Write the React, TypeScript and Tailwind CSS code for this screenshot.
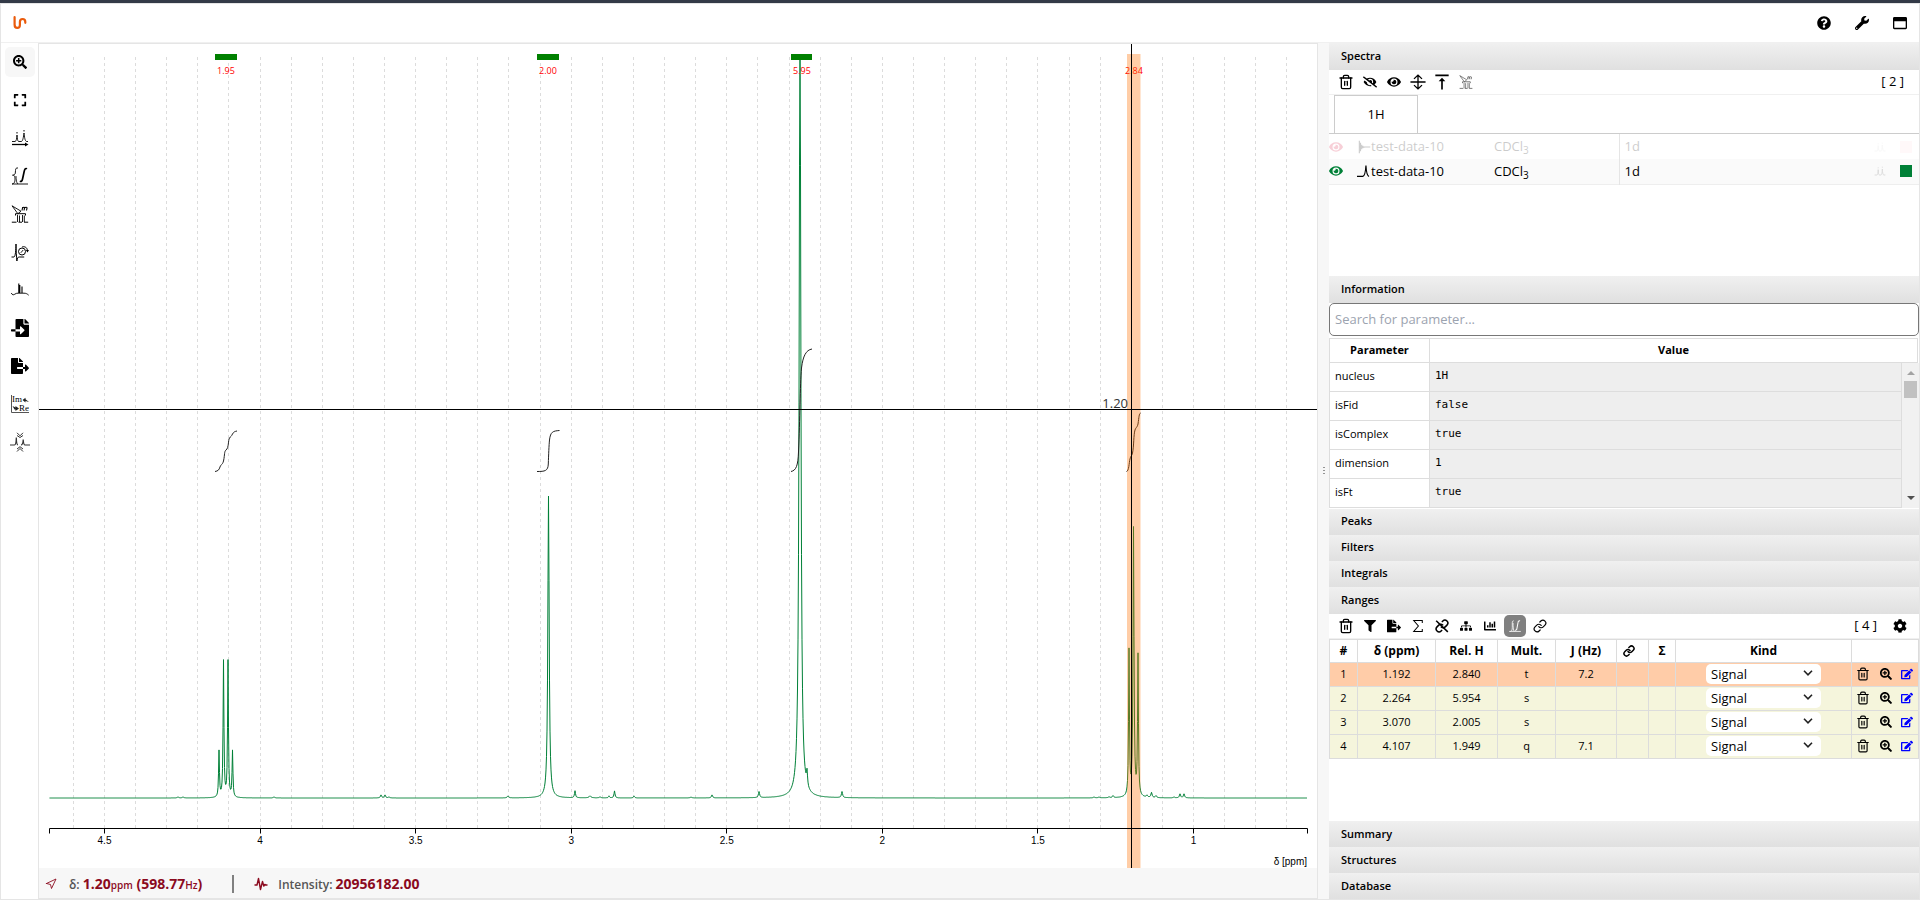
import React from "react";
import { Link as LinkIcon, Navigation, Trash2 } from "lucide-react";
import {
  FaChartBar,
  FaCog,
  FaEdit,
  FaExpand,
  FaEye,
  FaEyeSlash,
  FaFileExport,
  FaFileImport,
  FaFilter,
  FaQuestionCircle,
  FaRegWindowMaximize,
  FaSearchPlus,
  FaSitemap,
  FaWrench,
} from "react-icons/fa";
import { MdVerticalAlignTop } from "react-icons/md";

type IconProps = { className?: string };

function Glyph({ className, children }: { className?: string; children: React.ReactNode }) {
  return (
    <svg
      viewBox="0 0 18 18"
      className={className}
      fill="none"
      stroke="currentColor"
      strokeWidth="1"
      aria-hidden="true"
    >
      {children}
    </svg>
  );
}

const Logo = () => (
  <svg viewBox="0 0 14 14" className="size-3.5" fill="none" aria-hidden="true">
    <path
      d="M1.6 1.2v7.2c0 2.4 1 3.5 2.7 3.5s2.6-1.1 2.6-3V6c0-1.900 1-3 2.700-3s2.700 1 2.700 3v.8"
      stroke="#ea5b0c"
      strokeWidth="2.2"
      strokeLinecap="round"
    />
  </svg>
);

const PeakPickingIcon = ({ className }: IconProps) => (
  <Glyph className={className}>
    <path d="M1 12.500H4.200C5.300 12 5.700 10 6 6C6.300 10 6.700 12 7.500 12.500H10.500C11.800 12 12.500 8 13 4C13.400 8 14 12 15.500 12.500H17" strokeWidth=".9" />
    <path d="M6 3v1.500M13 1v1.500" strokeWidth="1" />
    <path d="M1 15.500h13.500" strokeWidth="1.300" />
    <path d="M14 13.500l3.500 2-3.500 2z" fill="currentColor" stroke="none" />
  </Glyph>
);

const IntegrateIcon = ({ className }: IconProps) => (
  <Glyph className={className}>
    <path d="M7 1C5.200.7 4.600 1.400 4.500 3.500L4.300 6C4.200 7.500 3 8 1.500 8.200C3 8 4 9 4 11c0 3 0 5.500-3 6h16" strokeWidth=".9" />
    <path d="M5 9c.2 4 .4 7 2 8" strokeWidth=".8" />
    <path d="M16 1.800c-1.500-.8-2.300 0-2.800 2.500l-1.600 7.500c-.5 2.300-1.200 3-2.800 2.400" strokeWidth="1.700" />
  </Glyph>
);

const RangesIcon = ({ className }: IconProps) => (
  <Glyph className={className}>
    <path d="M1 .8l9 5.400M1 .8l5.500 7.400M10 6.200L6.500 9" strokeWidth=".9" />
    <path d="M11 5.500l.7-3.500M11.500 3c1-1.200 2.300-1 2 .2l-.5 2.300M13.500 3c1-1.200 2.800-1 2.500.2l-.5 2.300" strokeWidth="1.100" />
    <path d="M4.500 10.500v-1.800h10v1.800" strokeWidth="1" />
    <path d="M.8 17.200h4.700M7.500 17.200h3.500M13 17.200h4.200" strokeWidth="1" />
    <path d="M6.500 10v7M8.500 10.500v6.500M11.500 10v7M13.300 10.500v6.500" strokeWidth=".9" />
  </Glyph>
);

const PhaseIcon = ({ className }: IconProps) => (
  <Glyph className={className}>
    <path d="M.5 14H3c1.500-.5 1.800-7 2-13c.2 7 .3 12 .9 17c.4-3 .8-4 2.300-4h5" />
    <circle cx="11" cy="8.500" r="3.500" />
    <path d="M9.800 9.800l2.400-2.800M11 4c3-1 5.500.5 5.500 4.500" strokeWidth=".9" />
    <path d="M14.800 7l1.700 2.500L18 7z" fill="currentColor" stroke="none" />
  </Glyph>
);

const BaselineIcon = ({ className }: IconProps) => (
  <Glyph className={className}>
    <path d="M.3 12c.8 2 2.200 2.200 3.500 1.200c1-.8 2-1 3.200-1h6c2 0 3 .5 4.700 2" strokeWidth=".9" />
    <path d="M7.800 12V2.500M8.800 12V4M11 12V5.500" strokeWidth="1.100" />
  </Glyph>
);

const RealImagIcon = ({ className }: IconProps) => (
  <svg viewBox="0 0 18 18" className={className} aria-hidden="true">
    <path d="M.5 0v17.500H18" fill="none" stroke="#555" strokeWidth="1" />
    <text x="1" y="6.500" fontSize="9" fontFamily="Liberation Serif, serif">Im</text>
    <text x="8" y="16" fontSize="9" fontFamily="Liberation Serif, serif">Re</text>
    <path d="M11.500 5l3-2.300v1.500L18 7l-3.500-1v1.500zM8 13.500L4.500 11v1.500L1.500 11l2 3.500h1V16z" fill="#222" />
  </svg>
);

const ExclusionIcon = ({ className }: IconProps) => (
  <svg viewBox="0 0 22 20" className={className} fill="none" stroke="#333" aria-hidden="true">
    <path d="M1 13h4.500c1.200 0 1.600-2 1.800-7.500c.2 5.500.5 7.500 1.700 7.500M12 13c1.500 0 2-1.500 2.200-5.500c.3 4 .6 5.500 1.800 5.500H21" strokeWidth="1.200" />
    <path d="M8 .8l3 3 3-3M8 3.500l3 2 3-2M8 19.500l3-3 3 3M8 17l3-2.300L14 17" strokeWidth="1" />
  </svg>
);

const ShowSameTopIcon = ({ className }: IconProps) => (
  <Glyph className={className}>
    <path d="M.5 9h17M9 1.500v15M4.500 5.500L9 1.200l4.500 4.300M4.500 12.500L9 16.800l4.500-4.300" strokeWidth="1.500" />
  </Glyph>
);

const SigmaIcon = ({ className }: IconProps) => (
  <Glyph className={className}>
    <path d="M14.500 5V2H3.500l6 7-6 7h11v-3" strokeWidth="1.300" />
  </Glyph>
);

const UnlinkIcon = ({ className }: IconProps) => (
  <svg viewBox="0 0 24 24" className={className} fill="none" stroke="currentColor" strokeWidth="2.600" aria-hidden="true">
    <path d="M10 13a5 5 0 0 0 7.540.54l3-3a5 5 0 0 0-7.070-7.070l-1.720 1.710" />
    <path d="M14 11a5 5 0 0 0-7.540-.54l-3 3a5 5 0 0 0 7.070 7.070l1.710-1.710" />
    <path d="M2 3l20 19" />
  </svg>
);

const IntegralCurvesIcon = ({ className }: IconProps) => (
  <Glyph className={className}>
    <path d="M1.500 16h15M7.500 2.500C6 2 5.500 3 5.500 5v6c0 3-.5 4.500-2.500 5M6.500 5c0 5 .2 9 1.500 11" />
    <path d="M15.500 2.500c-1.600-.5-2.500.5-2.700 2.500l-1.300 7c-.3 2-1 2.700-2.500 2.300" strokeWidth="1.300" />
  </Glyph>
);

const FidIcon = ({ className }: IconProps) => (
  <Glyph className={className}>
    <path d="M3 1v16M4.500 3.500v11M6 6v6M7.500 7.500v3M9 8.300v1.700M3 9h14" strokeWidth="1.400" />
  </Glyph>
);

const FtIcon = ({ className }: IconProps) => (
  <Glyph className={className}>
    <path d="M0 16h7.500C10.500 15.500 11 10 11.500 2c.4 8 1 13 4 14" strokeWidth="1.500" />
  </Glyph>
);

const SmallPeaksIcon = ({ className }: IconProps) => (
  <Glyph className={className}>
    <path d="M1 15h3c1.500 0 2-2 2.300-8c.3 6 .7 8 2.200 8h1.500c1.700 0 2.200-3 2.500-9c.3 6 1 9 2.500 9h2M6.300 3.500v1.500M12.500 2.500V4" strokeWidth="1.300" />
  </Glyph>
);

const PulseIcon = ({ className }: IconProps) => (
  <svg viewBox="0 0 14 14" className={className} fill="none" stroke="currentColor" strokeWidth="1.400" strokeLinejoin="round" aria-hidden="true">
    <path d="M.5 8H3L4.500 1.500l2 11 2-8L9.800 9l1-1.500 1 .5h1.700" />
  </svg>
);

/* ---------------------------------------------------------------- chart */

const BASELINE = 798;
const MAX_HEIGHT = 740;
const peaks: Array<[number, number, number]> = [
  [219, 46, 0.5], [223.5, 136, 0.5], [228, 136, 0.5], [232.500, 46, 0.5],
  [548.5, 302, 0.8], [800, 790, 1], [807, 14, 0.6],
  [1129, 145, 0.5], [1133.5, 268, 0.6], [1138, 140, 0.5],
  [178, 1, 0.8], [183, 1, 0.8], [274, 1, 0.8], [381, 3, 0.7], [385, 3, 0.7],
  [389, 1, 0.8], [508, 2, 0.8], [575, 7, 0.6], [590, 2, 1.200], [600, 1, 0.8],
  [609, 2, 0.6], [614.5, 7, 0.6], [634, 2, 0.7], [691, 1, 0.7], [712, 3, 0.7],
  [759, 6, 0.7], [842, 6, 0.7], [1094, 1, 0.7], [1099, 1, 0.7], [1109, 1, 0.7],
  [1113, 2, 0.7], [1147, 2, 0.7], [1151.5, 5, 0.7], [1156, 2, 0.7],
  [1174, 1, 0.7], [1180, 4, 0.7], [1184, 4, 0.7],
];

function spectrumPath() {
  let d = "";
  for (let x = 49.5; x <= 1307; x += 0.5) {
    let h = 0;
    for (const [c, height, w] of peaks) {
      const dx = x - c;
      h += (height * w * w) / (dx * dx + w * w);
    }
    d += `${d ? "L" : "M"}${x} ${(BASELINE - Math.min(h, MAX_HEIGHT)).toFixed(1)}`;
  }
  return d;
}

const ppmToX = (ppm: number) => 104.5 + (4.5 - ppm) * 311.14;
const gridLines = Array.from({ length: 40 }, (_, i) => Math.floor(ppmToX(4.6 - i * 0.1)) + 0.5);
const ticks = [4.5, 4, 3.5, 3, 2.5, 2, 1.5, 1];
const ranges = [
  { x: 215, w: 22, label: "1.95" },
  { x: 537, w: 22, label: "2.00" },
  { x: 791, w: 21, label: "5.95" },
];

function Chart() {
  return (
    <svg viewBox="39 44 1278 824" className="block size-full" role="img" aria-label="1H spectrum">
      <g stroke="#dcdcdc" strokeDasharray="3 3">
        {gridLines.map((x) => (
          <path key={x} d={`M${x} 57V828`} />
        ))}
      </g>
      <path d={spectrumPath()} fill="none" stroke="#008037" strokeWidth="1" strokeLinejoin="round" />
      <g fill="none" stroke="#222" strokeWidth="1">
        <path d="M215 471.500C218 471 219 470 220 467C221 464 222.500 465 223.500 461C225 454 224 452 226 450C229 448 228 440 229.500 438C231 436 231 437 232.500 434C234 431.500 235 431.500 237 431" />
        <path d="M537 471.500C545 471.500 548 471 548.300 464C548.600 455 549 445 549.500 440C550.500 431.500 553 431 559.500 430.500" />
        <path d="M791 471.500C796 470.500 798 466 798.500 452C800 420 800 385 801.500 368C803 356 806 350 812 349" />
        <path d="M1126.500 471.500C1129 471 1129 463 1130 459C1130.500 456 1132 456 1132.500 453C1134 446 1133.500 435 1135 430C1136 427 1137 428 1138 424C1139 417 1139 414 1140.500 413" />
      </g>
      <g fontFamily="Open Sans, Noto Sans, sans-serif" fontSize="9" fill="#ff0000" textAnchor="middle">
        {ranges.map((r) => (
          <g key={r.label}>
            <rect x={r.x} y="54" width={r.w} height="6" fill="#008000" />
            <text x={r.x + 11} y="74">{r.label}</text>
          </g>
        ))}
        <text x="1134" y="74">2.84</text>
      </g>
      <rect x="1127" y="54" width="13.500" height="814" fill="#ff6f00" opacity=".35" />
      <path d="M49.500 833.500V828.500H1307.500V833.500" fill="none" stroke="#000" />
      <g fontFamily="Liberation Sans, Arial, sans-serif" fontSize="10" textAnchor="middle">
        {ticks.map((t) => (
          <g key={t}>
            <path d={`M${Math.floor(ppmToX(t)) + 0.5} 828.500v5`} stroke="#000" />
            <text x={ppmToX(t)} y="844">{t}</text>
          </g>
        ))}
        <text x="1307" y="865" textAnchor="end">δ [ppm]</text>
      </g>
      <text x="1128" y="408" textAnchor="end" fontSize="13" fill="#333" fontFamily="Open Sans, Noto Sans, sans-serif">
        1.20
      </text>
      <path d="M39 409.500H1317M1131.500 44V868" stroke="#000" />
    </svg>
  );
}

/* --------------------------------------------------------------- panels */

function PanelHeader({ title, open }: { title: string; open?: boolean }) {
  return (
    <h2 className={open ? "h-[27px] flex-none" : "h-[26px] flex-none"}>
      <button
        type="button"
        aria-expanded={Boolean(open)}
        className="flex size-full items-center bg-linear-to-b from-[#f0f0f0] to-[#e0e0e0] px-3 text-[11px] font-semibold text-black"
      >
        {title}
      </button>
    </h2>
  );
}

function ToolButton({ label, children, active }: { label: string; children: React.ReactNode; active?: boolean }) {
  return (
    <button
      type="button"
      aria-label={label}
      className={
        active
          ? "mx-0.5 flex size-[22px] items-center justify-center rounded-[5px] bg-[#808080] text-white"
          : "flex size-6 items-center justify-center"
      }
    >
      {children}
    </button>
  );
}

const spectra = [
  { name: "test-data-10", icon: <FidIcon className="size-3.5" />, eye: "text-[#dc143c]", color: "bg-[#ffdfe5]", hidden: true },
  { name: "test-data-10", icon: <FtIcon className="size-3.5" />, eye: "text-[#008037]", color: "bg-[#008037]", hidden: false },
];

function SpectraPanel() {
  return (
    <div className="min-h-0 flex-[204] bg-white">
      <div className="flex h-[25px] items-center border-b border-[#f0f0f0] pr-[15px] pl-[5px]">
        <ToolButton label="Delete"><Trash2 className="size-4" /></ToolButton>
        <ToolButton label="Hide all"><FaEyeSlash className="size-3.5" /></ToolButton>
        <ToolButton label="Show all"><FaEye className="size-3.5" /></ToolButton>
        <ToolButton label="Same top"><ShowSameTopIcon className="size-4" /></ToolButton>
        <ToolButton label="Reset scale"><MdVerticalAlignTop className="size-5" /></ToolButton>
        <ToolButton label="Automatic ranges"><RangesIcon className="size-3.5 text-[#555]" /></ToolButton>
        <span className="ml-auto text-[13px]">[ 2 ]</span>
      </div>
      <div role="tablist" className="flex h-[39px] border-b border-[#cccccc] pl-[5px]">
        <button type="button" role="tab" aria-selected="true" className="w-[84px] border border-b-0 border-[#cccccc] bg-white text-[13px]">
          1H
        </button>
      </div>
      <table className="w-full table-fixed border-collapse text-[13px]">
        <colgroup>
          <col className="w-[165px]" />
          <col className="w-[125px]" />
          <col />
          <col className="w-[50px]" />
        </colgroup>
        <tbody>
          {spectra.map((s, i) => (
            <tr key={i} className={s.hidden ? "h-[25px] opacity-20" : "h-[25px] border-b border-[#eeeeee] bg-[#fafafa]"}>
              <td className="p-0">
                <div className="flex items-center">
                  <button type="button" aria-label="Toggle visibility" className={s.eye}><FaEye className="size-3.5" /></button>
                  <span className="ml-3.5">{s.icon}</span>
                  {s.name}
                </div>
              </td>
              <td className="p-0">CDCl<sub className="bottom-[-3px] text-[10px]">3</sub></td>
              <td className="border-l border-[#e5e5e5] p-0 pl-[5px]">1d</td>
              <td className="p-0">
                <div className="flex items-center justify-end gap-3.5 pr-[7px]">
                  <SmallPeaksIcon className="size-3 text-[#d8d8d8]" />
                  <span className={`size-3 ${s.color}`} />
                </div>
              </td>
            </tr>
          ))}
        </tbody>
      </table>
    </div>
  );
}

const parameters = [
  ["nucleus", "1H"],
  ["isFid", "false"],
  ["isComplex", "true"],
  ["dimension", "1"],
  ["isFt", "true"],
];

function InformationPanel() {
  return (
    <div className="flex flex-none flex-col bg-white pb-px">
      <input
        type="text"
        aria-label="Search for parameter"
        placeholder="Search for parameter..."
        className="h-[33px] w-full rounded-[5px] border border-[#777777] px-[5px] text-[13px] placeholder:text-[#9ca3af]"
      />
      <div className="relative mt-0.5 pr-px">
        <table className="w-full table-fixed border-collapse border border-[#dddddd] text-[11px]">
          <thead>
            <tr className="h-6">
              <th className="w-[100px] border border-[#dddddd] p-0 font-bold">Parameter</th>
              <th className="border border-[#dddddd] p-0 font-bold">Value</th>
            </tr>
          </thead>
          <tbody>
            {parameters.map(([name, value]) => (
              <tr key={name} className="h-[29px]">
                <td className="border border-[#dddddd] p-0 pl-[5px]">{name}</td>
                <td className="border border-[#dddddd] bg-[#eeeeee] p-0 pl-[5px] font-['DejaVu_Sans_Mono',monospace]">{value}</td>
              </tr>
            ))}
          </tbody>
        </table>
        <div className="absolute top-[25px] right-0 bottom-0 flex w-[18px] flex-col items-center border-l border-[#dddddd] bg-[#f1f1f1] py-2">
          <svg viewBox="0 0 8 4" className="h-1 w-2" aria-hidden="true"><path d="M0 4l4-4 4 4z" fill="#a3a3a3" /></svg>
          <div className="mt-1.5 h-[17px] w-[13px] bg-[#c1c1c1]" />
          <svg viewBox="0 0 8 4" className="mt-auto h-1 w-2" aria-hidden="true"><path d="M0 0l4 4 4-4z" fill="#505050" /></svg>
        </div>
      </div>
    </div>
  );
}

const rangeRows = [
  { ppm: "1.192", rel: "2.840", mult: "t", j: "7.2" },
  { ppm: "2.264", rel: "5.954", mult: "s", j: "" },
  { ppm: "3.070", rel: "2.005", mult: "s", j: "" },
  { ppm: "4.107", rel: "1.949", mult: "q", j: "7.1" },
];

const cell = "border border-[#dcdcdc] p-0";

function RangesPanel() {
  return (
    <div className="min-h-0 flex-[206] bg-white">
      <div className="flex h-[25px] items-center border-b border-[#f0f0f0] pr-3 pl-[5px]">
        <ToolButton label="Delete"><Trash2 className="size-4" /></ToolButton>
        <ToolButton label="Filter"><FaFilter className="size-3" /></ToolButton>
        <ToolButton label="Export"><FaFileExport className="size-3.5" /></ToolButton>
        <ToolButton label="Sum"><SigmaIcon className="size-3.5" /></ToolButton>
        <ToolButton label="Unlink"><UnlinkIcon className="size-3.5" /></ToolButton>
        <ToolButton label="Multiplicity trees"><FaSitemap className="size-3" /></ToolButton>
        <ToolButton label="Chart"><FaChartBar className="size-3" /></ToolButton>
        <ToolButton label="Integral curves" active><IntegralCurvesIcon className="size-3.5" /></ToolButton>
        <ToolButton label="Link"><LinkIcon className="size-3.5" /></ToolButton>
        <span className="mr-4 ml-auto text-[13px]">[ 4 ]</span>
        <button type="button" aria-label="Preferences"><FaCog className="size-3.5" /></button>
      </div>
      <table className="w-full table-fixed border-collapse text-center text-[11px]">
        <thead>
          <tr className="h-[23px] text-xs">
            <th className={`${cell} w-7`}>#</th>
            <th className={`${cell} w-[78px]`}>δ (ppm)</th>
            <th className={`${cell} w-[62px]`}>Rel. H</th>
            <th className={`${cell} w-[58px]`}>Mult.</th>
            <th className={`${cell} w-[61px]`}>J (Hz)</th>
            <th className={`${cell} w-8`} aria-label="Link"><LinkIcon className="ml-1.5 size-3" strokeWidth={3} /></th>
            <th className={`${cell} w-[27px]`}>Σ</th>
            <th className={cell}>Kind</th>
            <th className={`${cell} w-[67px]`} aria-label="Actions" />
          </tr>
        </thead>
        <tbody>
          {rangeRows.map((r, i) => (
            <tr key={r.ppm} className={i === 0 ? "h-6 bg-[#ffcca8]" : "h-6 bg-[#f5f5dc]"}>
              <td className={cell}>{i + 1}</td>
              <td className={cell}>{r.ppm}</td>
              <td className={cell}>{r.rel}</td>
              <td className={cell}>{r.mult}</td>
              <td className={cell}>{r.j}</td>
              <td className={cell} />
              <td className={cell} />
              <td className={cell}>
                <div className="relative mx-auto w-[115px]">
                  <select aria-label={`Kind of range ${i + 1}`} className="block h-5 w-full appearance-none rounded-[5px] bg-white px-[5px] text-[13px] leading-5">
                    <option>Signal</option>
                  </select>
                  <svg viewBox="0 0 10 6" className="pointer-events-none absolute top-1.5 right-2 h-1.5 w-2.5" fill="none" stroke="#222" strokeWidth="1.600" aria-hidden="true">
                    <path d="M1 .8l4 4 4-4" />
                  </svg>
                </div>
              </td>
              <td className={cell}>
                <div className="flex items-center justify-between pr-[5px] pl-1">
                  <button type="button" aria-label="Delete range"><Trash2 className="size-3.5" /></button>
                  <button type="button" aria-label="Zoom to range"><FaSearchPlus className="size-3" /></button>
                  <button type="button" aria-label="Edit range" className="text-[#0000ff]"><FaEdit className="size-3" /></button>
                </div>
              </td>
            </tr>
          ))}
        </tbody>
      </table>
    </div>
  );
}

/* ----------------------------------------------------------------- page */

const tools: Array<{ label: string; icon: React.ReactNode }> = [
  { label: "Zoom", icon: <FaSearchPlus className="size-3.5" /> },
  { label: "Full screen", icon: <FaExpand className="size-3.5" /> },
  { label: "Peak picking", icon: <PeakPickingIcon className="size-[18px]" /> },
  { label: "Integrate", icon: <IntegrateIcon className="size-[18px]" /> },
  { label: "Pick ranges", icon: <RangesIcon className="size-[18px]" /> },
  { label: "Phase correction", icon: <PhaseIcon className="size-[18px]" /> },
  { label: "Baseline correction", icon: <BaselineIcon className="size-[18px]" /> },
  { label: "Import", icon: <FaFileImport className="size-[18px]" /> },
  { label: "Export", icon: <FaFileExport className="size-[18px]" /> },
  { label: "Real / imaginary", icon: <RealImagIcon className="size-[18px]" /> },
  { label: "Exclusion zones", icon: <ExclusionIcon className="h-5 w-[22px]" /> },
];

export default function App() {
  return (
    <div className="flex h-screen flex-col border-t-[3px] border-[#333a47] bg-white font-['Open_Sans','Noto_Sans',sans-serif] text-black">
      <div className="flex min-h-0 flex-1 flex-col border border-[#e5e5e5]">
        <header className="flex h-[39px] flex-none items-center justify-between border-b border-[#f0f0f0] pr-3 pl-3">
          <a href="#" aria-label="Home"><Logo /></a>
          <div className="flex items-center gap-6">
            <button type="button" aria-label="Help"><FaQuestionCircle className="size-3.5" /></button>
            <button type="button" aria-label="Settings"><FaWrench className="size-3.5" /></button>
            <button type="button" aria-label="Window"><FaRegWindowMaximize className="size-3.5" /></button>
          </div>
        </header>
        <div className="flex min-h-0 flex-1">
          <nav aria-label="Tools" className="flex w-[37px] flex-none flex-col items-center gap-2 pt-1">
            {tools.map((t, i) => (
              <button
                key={t.label}
                type="button"
                aria-label={t.label}
                className={
                  i === 0
                    ? "flex size-[30px] items-center justify-center rounded-[5px] bg-[#f7f7f7]"
                    : "flex size-[30px] items-center justify-center"
                }
              >
                {t.icon}
              </button>
            ))}
          </nav>
          <main className="flex min-w-0 flex-1 flex-col border-t border-r border-l border-[#e5e5e5]">
            <div className="min-h-0 flex-1">
              <Chart />
            </div>
            <footer className="flex h-[31px] flex-none items-center border-b border-[#e5e5e5] bg-[#f7f7f7] pt-0.5 pl-1.5 text-sm font-semibold text-[#8b0a1e]">
              <Navigation className="size-3" strokeWidth={1.8} />
              <span className="ml-3">
                <span className="text-xs text-[#555555]">δ: </span>
                <span className="font-bold">1.20</span>
                <span className="text-[10px]">ppm</span>
                <span className="font-bold"> (598.77</span>
                <span className="text-[10px]">Hz</span>
                <span className="font-bold">)</span>
              </span>
              <span className="ml-[30px] h-[18px] w-0.5 bg-[#808080]" />
              <PulseIcon className="ml-5 size-3.5" />
              <span className="ml-2.5">
                <span className="text-xs text-[#555555]">Intensity: </span>
                <span className="font-bold">20956182.00</span>
              </span>
            </footer>
          </main>
          <div className="flex w-[11px] flex-none items-center justify-center bg-[#f7f7f7]">
            <svg viewBox="0 0 2 8" className="h-2 w-0.5" aria-hidden="true">
              <path d="M.5 0h1v1h-1zM.5 3h1v1h-1zM.5 6h1v1h-1z" fill="#333" />
            </svg>
          </div>
          <aside className="flex w-[590px] flex-none flex-col">
            <PanelHeader title="Spectra" open />
            <SpectraPanel />
            <PanelHeader title="Information" open />
            <InformationPanel />
            <PanelHeader title="Peaks" />
            <PanelHeader title="Filters" />
            <PanelHeader title="Integrals" />
            <PanelHeader title="Ranges" open />
            <RangesPanel />
            <PanelHeader title="Summary" />
            <PanelHeader title="Structures" />
            <PanelHeader title="Database" />
          </aside>
        </div>
      </div>
    </div>
  );
}
